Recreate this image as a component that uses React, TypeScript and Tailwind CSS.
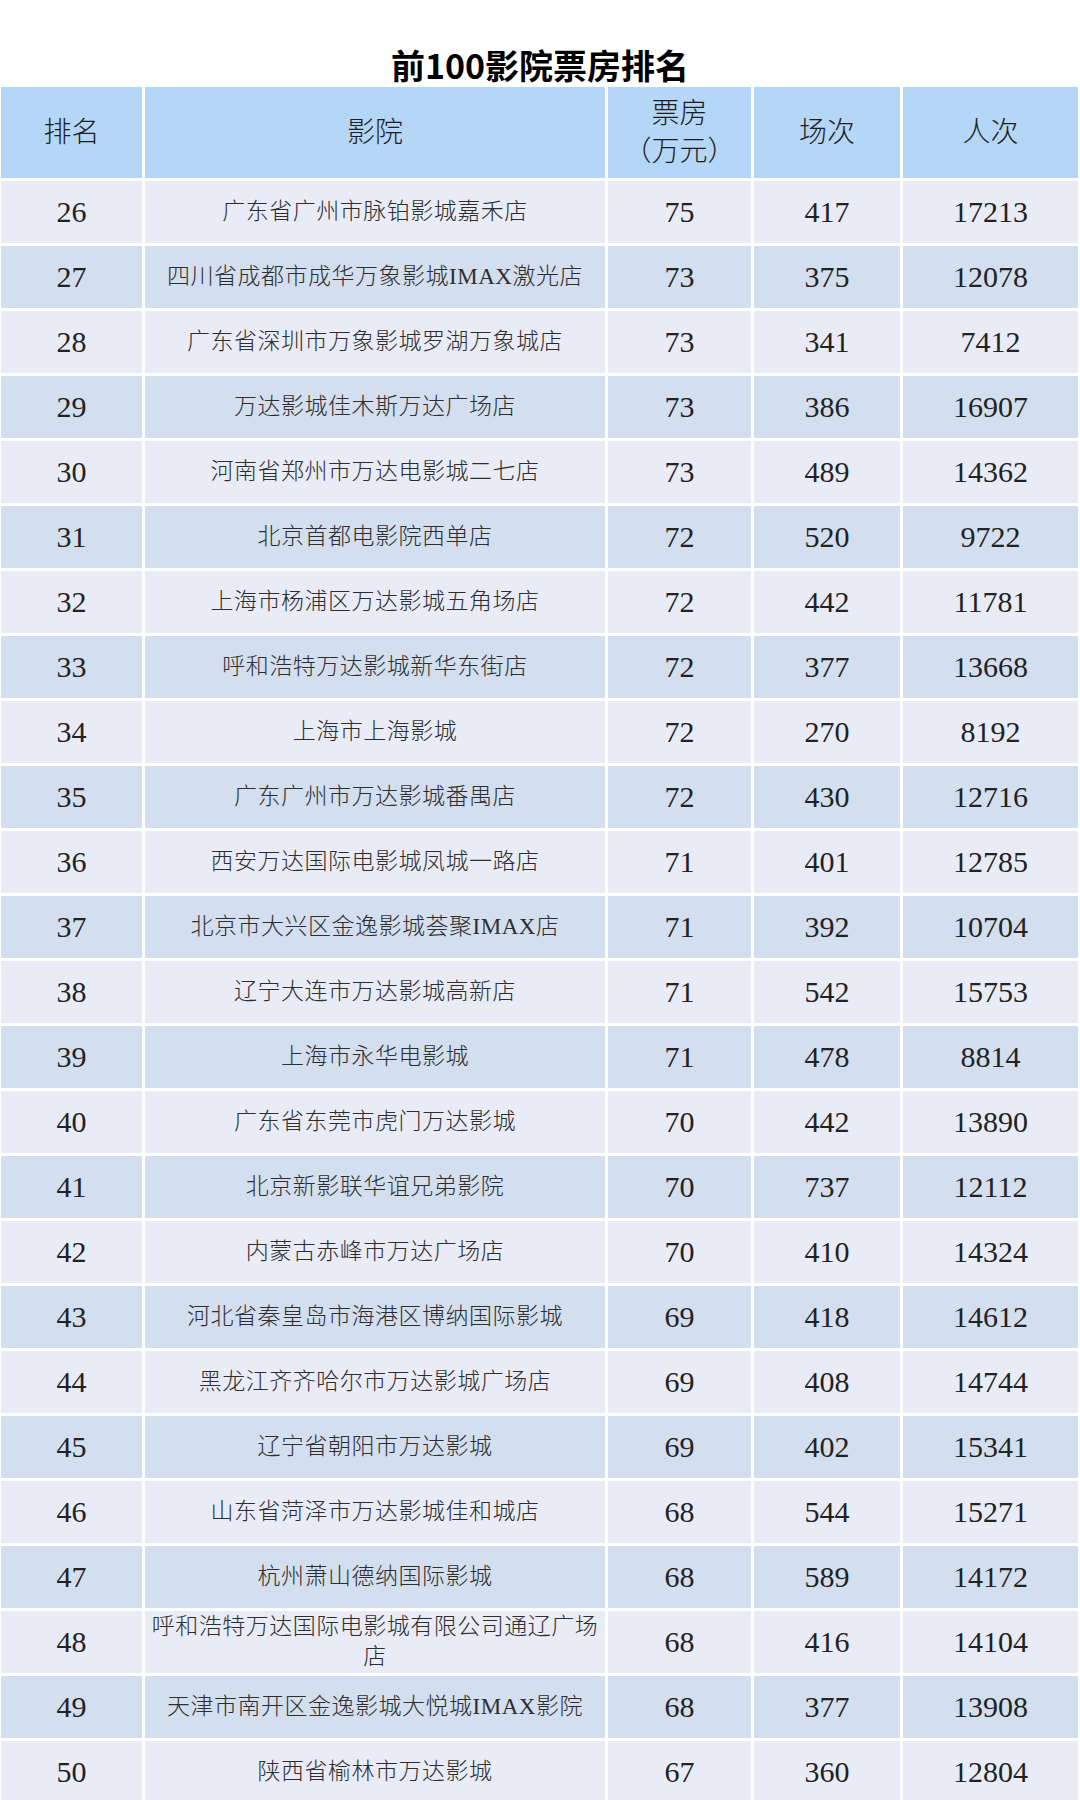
const rows: Array<[number, string, number, number, number]> = [
  [26, "广东省广州市脉铂影城嘉禾店", 75, 417, 17213],
  [27, "四川省成都市成华万象影城IMAX激光店", 73, 375, 12078],
  [28, "广东省深圳市万象影城罗湖万象城店", 73, 341, 7412],
  [29, "万达影城佳木斯万达广场店", 73, 386, 16907],
  [30, "河南省郑州市万达电影城二七店", 73, 489, 14362],
  [31, "北京首都电影院西单店", 72, 520, 9722],
  [32, "上海市杨浦区万达影城五角场店", 72, 442, 11781],
  [33, "呼和浩特万达影城新华东街店", 72, 377, 13668],
  [34, "上海市上海影城", 72, 270, 8192],
  [35, "广东广州市万达影城番禺店", 72, 430, 12716],
  [36, "西安万达国际电影城凤城一路店", 71, 401, 12785],
  [37, "北京市大兴区金逸影城荟聚IMAX店", 71, 392, 10704],
  [38, "辽宁大连市万达影城高新店", 71, 542, 15753],
  [39, "上海市永华电影城", 71, 478, 8814],
  [40, "广东省东莞市虎门万达影城", 70, 442, 13890],
  [41, "北京新影联华谊兄弟影院", 70, 737, 12112],
  [42, "内蒙古赤峰市万达广场店", 70, 410, 14324],
  [43, "河北省秦皇岛市海港区博纳国际影城", 69, 418, 14612],
  [44, "黑龙江齐齐哈尔市万达影城广场店", 69, 408, 14744],
  [45, "辽宁省朝阳市万达影城", 69, 402, 15341],
  [46, "山东省菏泽市万达影城佳和城店", 68, 544, 15271],
  [47, "杭州萧山德纳国际影城", 68, 589, 14172],
  [48, "呼和浩特万达国际电影城有限公司通辽广场\n店", 68, 416, 14104],
  [49, "天津市南开区金逸影城大悦城IMAX影院", 68, 377, 13908],
  [50, "陕西省榆林市万达影城", 67, 360, 12804],
]

const serif = "font-['Liberation_Serif','Noto_Sans_CJK_SC',serif]"

export default function App() {
  return (
    <div className="min-h-[1800px] bg-white">
      {/* Title */}
      <div className="flex h-[87px] items-end justify-center pb-[5px]">
        <h1 className="font-['Noto_Sans_CJK_SC',sans-serif] text-[34px] font-bold leading-none text-black">
          前100影院票房排名
        </h1>
      </div>

      {/* Table */}
      <div className="ml-[1px] grid grid-cols-[141px_460px_143px_146px_175px] gap-[3px] text-center">
        <HeaderCell>排名</HeaderCell>
        <HeaderCell>影院</HeaderCell>
        <HeaderCell>
          <span className="leading-[38px]">
            票房
            <br />
            （万元）
          </span>
        </HeaderCell>
        <HeaderCell>场次</HeaderCell>
        <HeaderCell>人次</HeaderCell>

        {rows.map(([rank, name, box, shows, people], i) => {
          const bg = i % 2 === 0 ? "bg-[#e9ecf6]" : "bg-[#d3deee]"
          return (
            <div key={rank} className="contents">
              <NumCell bg={bg}>{rank}</NumCell>
              <div
                className={`${bg} flex h-[62px] items-center justify-center whitespace-pre-line ${serif} text-[23px] font-light leading-[30px] tracking-[0.5px] text-[#2e2e2e]`}
              >
                {name}
              </div>
              <NumCell bg={bg}>{box}</NumCell>
              <NumCell bg={bg}>{shows}</NumCell>
              <NumCell bg={bg}>{people}</NumCell>
            </div>
          )
        })}
      </div>
    </div>
  )
}

function HeaderCell({ children }: { children: React.ReactNode }) {
  return (
    <div
      className={`flex h-[91px] items-center justify-center bg-[#b4d6f7] ${serif} text-[28px] font-light leading-none text-[#1e1e1e]`}
    >
      {children}
    </div>
  )
}

function NumCell({ bg, children }: { bg: string; children: React.ReactNode }) {
  return (
    <div
      className={`${bg} flex h-[62px] items-center justify-center ${serif} text-[30px] leading-none text-[#222]`}
    >
      {children}
    </div>
  )
}
